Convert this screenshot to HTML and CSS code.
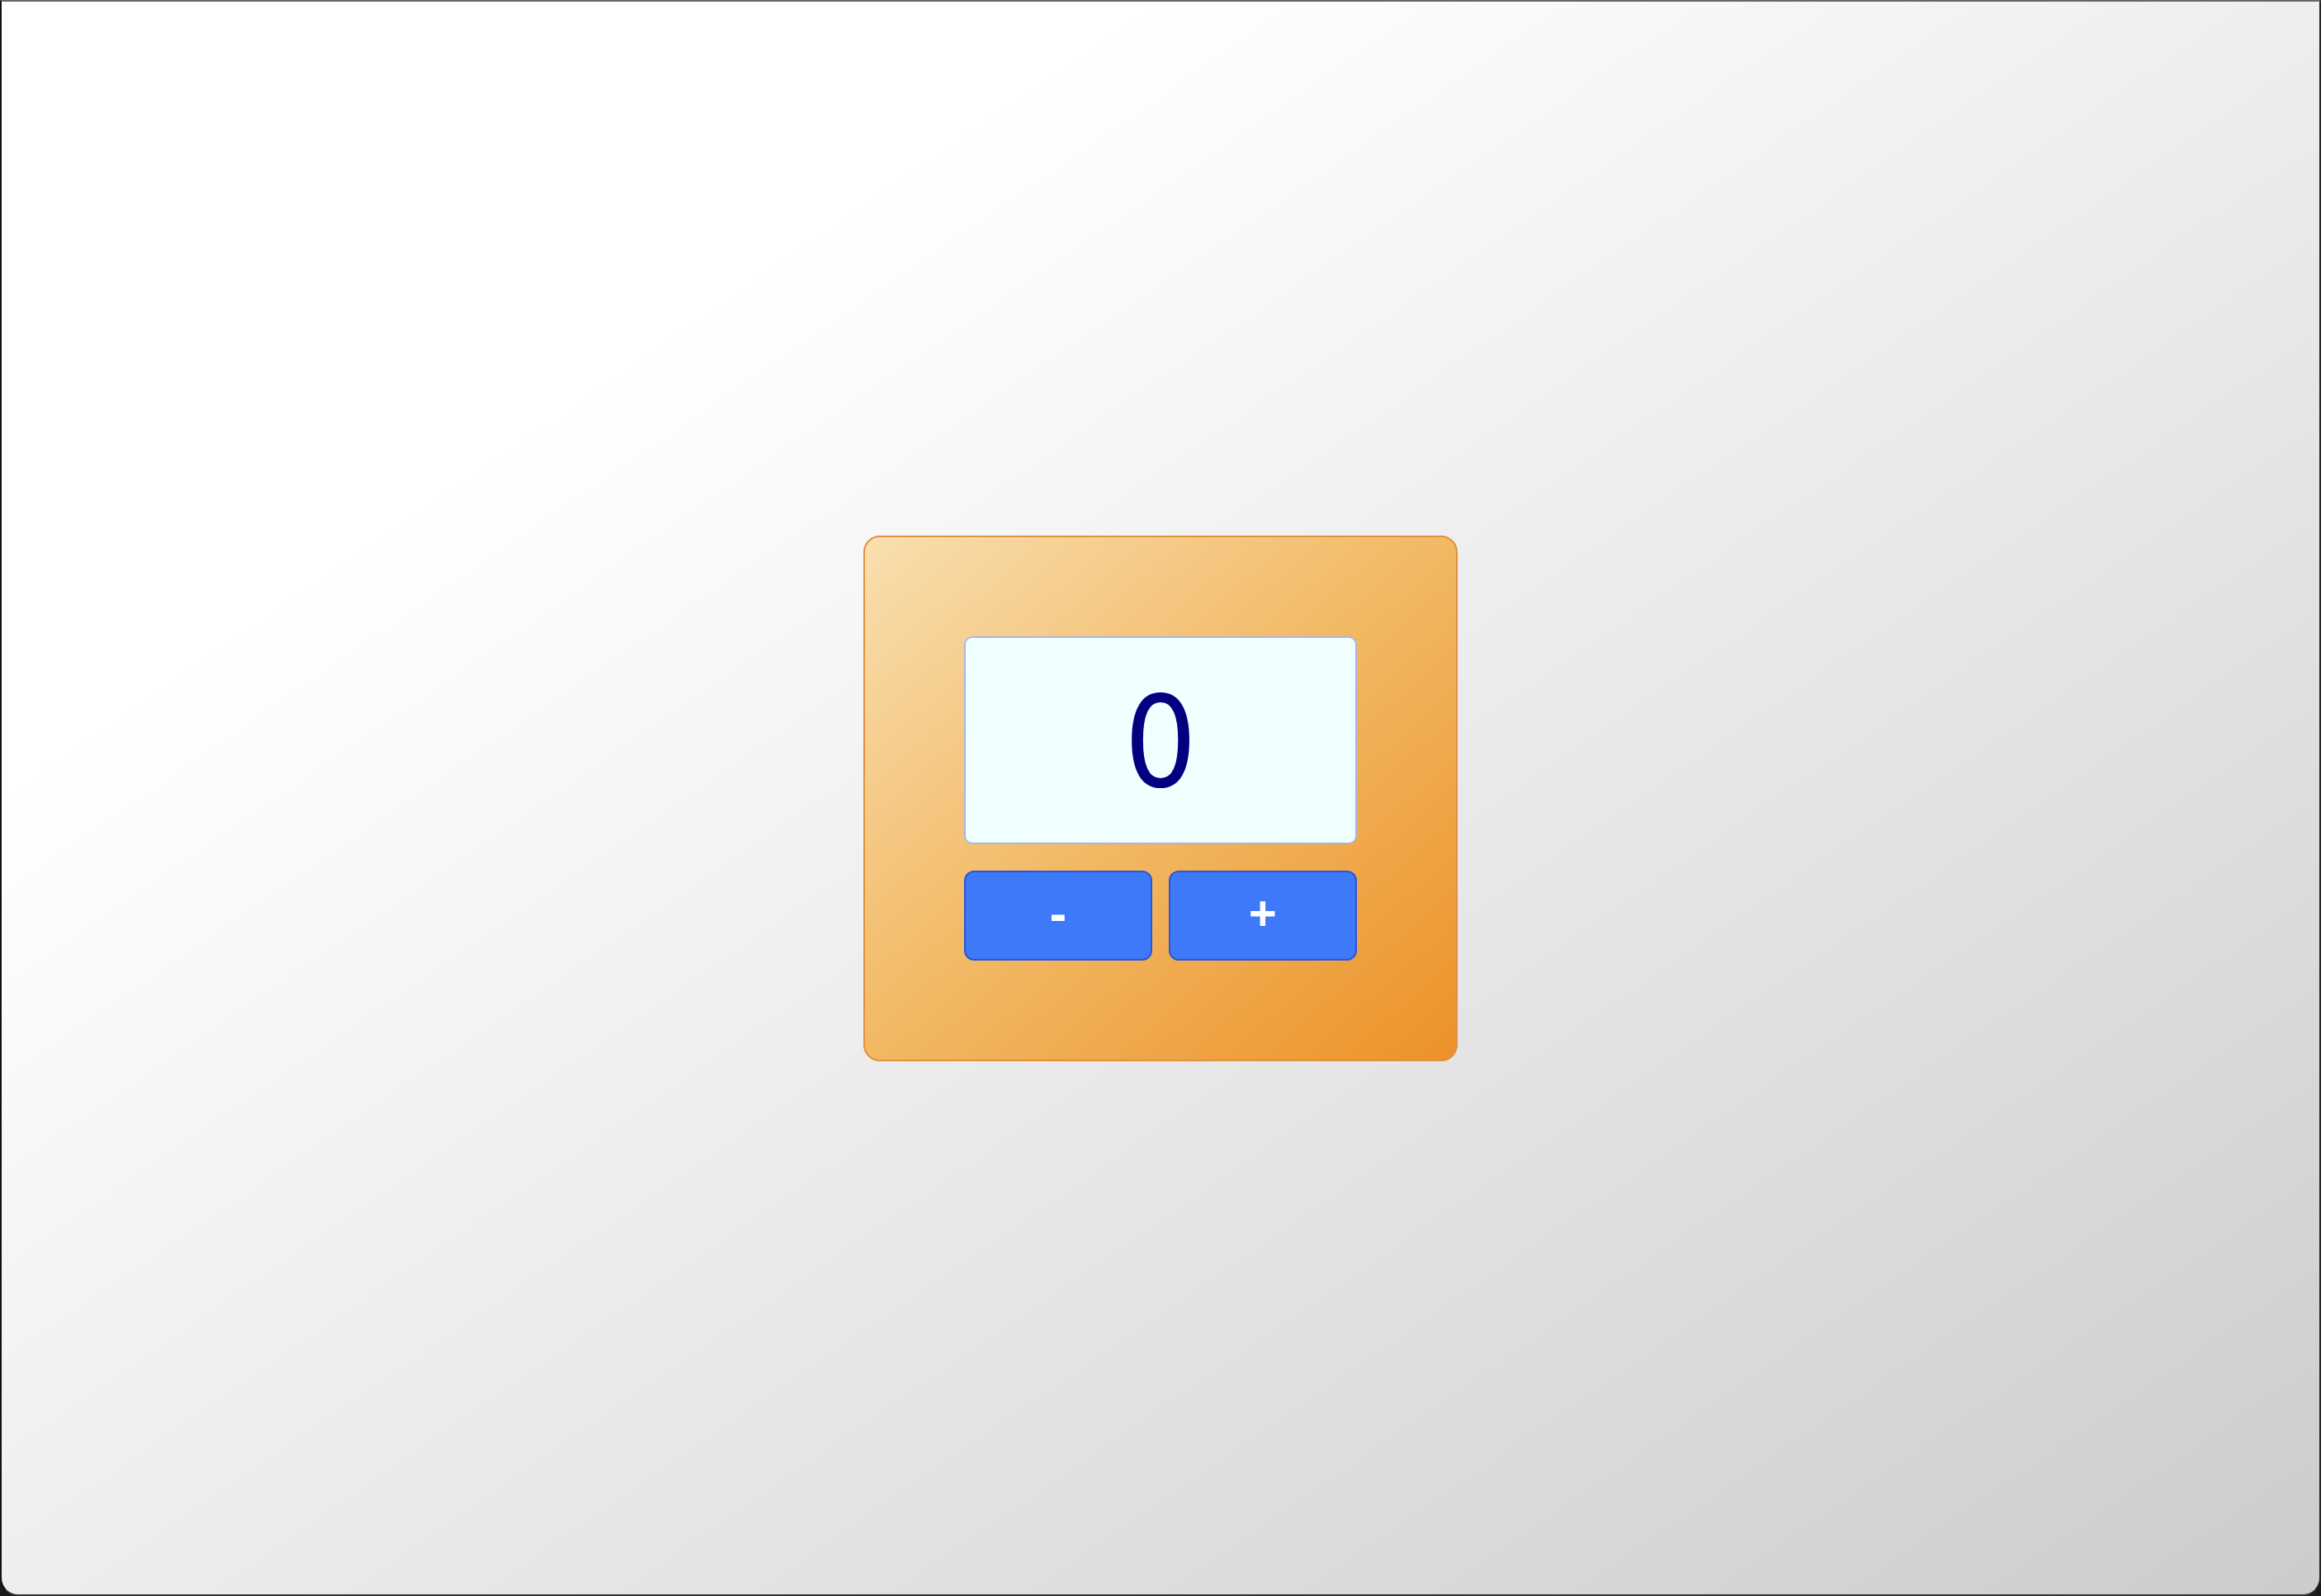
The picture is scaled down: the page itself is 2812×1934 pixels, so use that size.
FILE: index.html
```html
<!DOCTYPE html>
<html lang="en">
<head>
<meta charset="utf-8">
<title>Counter</title>
<link rel="stylesheet" href="styles.css">
</head>
<body>
<div class="page">
  <div class="card">
    <div class="display">0</div>
    <div class="controls">
      <button class="btn" type="button">-</button>
      <button class="btn" type="button">+</button>
    </div>
  </div>
</div>
</body>
</html>
```
FILE: styles.css
```css
html, body {
  margin: 0;
  padding: 0;
  background: #1a1a1a;
}
body {
  font-family: "Open Sans", "Noto Sans", sans-serif;
}
.page {
  box-sizing: border-box;
  width: 2812px;
  height: 1934px;
  border-top: 2px solid #666666;
  border-left: 2px solid #111111;
  border-right: 2px solid #222222;
  border-bottom: 2px solid #333333;
  border-radius: 0 0 22px 22px;
  background: linear-gradient(to bottom right, #ffffff 25%, #cccccc 100%);
  display: flex;
  align-items: center;
  justify-content: center;
}
.card {
  box-sizing: border-box;
  width: 720px;
  padding: 120px;
  border: 2px solid #e0913c;
  border-radius: 20px;
  background: linear-gradient(to bottom right, #f9dfb0 0%, #f2b863 50%, #ec9229 100%);
  display: flex;
  flex-direction: column;
  gap: 32px;
}
.display {
  box-sizing: border-box;
  height: 252px;
  padding-top: 6px;
  border: 2px solid #a9b4e6;
  border-radius: 10px;
  background: #f0ffff;
  color: #000080;
  font-family: "DejaVu Sans Condensed", "DejaVu Sans", sans-serif;
  font-size: 154px;
  line-height: 1;
  display: flex;
  align-items: center;
  justify-content: center;
}
.controls {
  display: flex;
  gap: 20px;
}
.btn {
  box-sizing: border-box;
  flex: 1;
  height: 109px;
  border: 2px solid #2b56d9;
  border-radius: 12px;
  background: #3d79f8;
  color: #ffffff;
  font-family: "Open Sans", "Noto Sans", sans-serif;
  font-size: 60px;
  font-weight: 700;
  line-height: 1;
  padding: 0 0 6px 0;
  display: flex;
  align-items: center;
  justify-content: center;
}
```
